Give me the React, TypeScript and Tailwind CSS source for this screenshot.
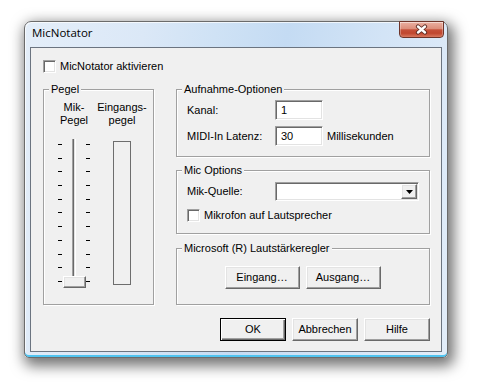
const sunken =
  "border border-t-[#a0a0a0] border-l-[#a0a0a0] border-b-white border-r-white bg-white shadow-[inset_1px_1px_0_#696969,inset_-1px_-1px_0_#e3e3e3]";
const raised =
  "border border-t-white border-l-white border-b-[#696969] border-r-[#696969] bg-[#f0f0f0] shadow-[inset_-1px_-1px_0_#a0a0a0,inset_1px_1px_0_#e3e3e3]";

function Group({ label, className, children }: { label: string; className: string; children?: React.ReactNode }) {
  return (
    <div className={`relative border border-[#a0a0a0] shadow-[inset_1px_1px_0_#fff,1px_1px_0_#fff] ${className}`}>
      <span className="absolute top-[-7px] left-[5px] bg-[#f0f0f0] px-[2px] leading-[13px]">{label}</span>
      {children}
    </div>
  );
}

function Checkbox() {
  return <div className={`h-[13px] w-[13px] shrink-0 ${sunken}`} />;
}

function Button({ children, primary }: { children: React.ReactNode; primary?: boolean }) {
  if (primary) {
    return (
      <div className="flex h-[23px] w-[66px] items-center justify-center border border-black bg-[#f0f0f0] shadow-[inset_1px_1px_0_#fff,inset_-1px_-1px_0_#696969,inset_-2px_-2px_0_#a0a0a0]">
        {children}
      </div>
    );
  }
  return <div className={`flex h-[23px] w-[66px] items-center justify-center ${raised}`}>{children}</div>;
}

function Ticks() {
  return (
    <div className="flex h-full w-[4px] flex-col justify-between py-[5px]">
      {Array.from({ length: 11 }).map((_, i) => (
        <div key={i} className="h-[1px] w-[4px] bg-black" />
      ))}
    </div>
  );
}

function Field({ value, w }: { value: string; w: string }) {
  return <div className={`flex h-[20px] items-center pl-[5px] ${w} ${sunken}`}>{value}</div>;
}

export default function App() {
  return (
    <div className="h-[389px] w-[481px] overflow-hidden bg-white pt-[21px] pl-[24px]">
      {/* window frame */}
      <div className="flex h-[337px] w-[424px] flex-col rounded-t-[7px] rounded-b-[5px] border border-[#6b6b6b] bg-[linear-gradient(100deg,#e4eef9_0%,#dbe8f7_25%,#cfe2f5_40%,#c4dbf3_55%,#d3e4f6_75%,#e2edf9_100%)] px-[5px] pb-[5px] shadow-[inset_0_-2px_0_#4fc4f0,inset_1px_1px_0_rgba(255,255,255,0.7),3px_5px_14px_3px_rgba(0,0,0,0.55)]">
        <div className="flex h-[25px] items-start justify-between">
          <span className="pt-[3px] pl-[2px] font-['Open_Sans',sans-serif] text-[11.5px] leading-[16px] text-black">
            MicNotator
          </span>
          <div className="-mt-[1px] -mr-[2px] flex h-[17px] w-[45px] items-center justify-center rounded-b-[4px] border border-[#6e3328] bg-[linear-gradient(to_bottom,#eab0a2_0%,#dc8e7b_45%,#c5503a_52%,#c0472f_75%,#d9785f_100%)] shadow-[inset_0_1px_0_rgba(255,255,255,0.5),inset_1px_0_0_rgba(255,255,255,0.3),inset_-1px_0_0_rgba(255,255,255,0.3)]">
            <svg width="13" height="11" viewBox="0 0 13 11">
              <path d="M3 2.5 L10 8.5 M10 2.5 L3 8.5" stroke="#5b2a22" strokeWidth="4.2" strokeLinecap="round" fill="none" />
              <path d="M3 2.5 L10 8.5 M10 2.5 L3 8.5" stroke="#fff" strokeWidth="2.4" strokeLinecap="round" fill="none" />
            </svg>
          </div>
        </div>

        {/* client area */}
        <div className="flex h-[305px] flex-col border border-[#6b7480] bg-[#f0f0f0] pt-[12px] pr-[11px] pl-[12px] font-['Liberation_Sans',Arial,sans-serif] text-[11px] text-black">
          <div className="flex h-[13px] items-center gap-[4px]">
            <Checkbox />
            <span className="leading-[13px]">MicNotator aktivieren</span>
          </div>

          <div className="mt-[16px] flex gap-[22px]">
            {/* Pegel */}
            <Group label="Pegel" className="flex h-[216px] w-[111px] pt-[11px] pl-[14px]">
              <div className="flex w-[32px] flex-col items-center">
                <div className="text-center leading-[13px] whitespace-nowrap">
                  Mik-
                  <br />
                  Pegel
                </div>
                <div className="relative mt-[12px] flex h-[148px] w-[32px] justify-between">
                  <Ticks />
                  <div className="h-full w-[4px] border-l border-l-[#a0a0a0] border-r border-r-white bg-[linear-gradient(to_right,#696969_50%,#e3e3e3_50%)]" />
                  <Ticks />
                  <div className={`absolute top-[137px] left-[5px] h-[12px] w-[23px] ${raised}`} />
                </div>
              </div>
              <div className="ml-[7px] flex w-[50px] flex-col items-center">
                <div className="text-center leading-[13px] whitespace-nowrap">
                  Eingangs-
                  <br />
                  pegel
                </div>
                <div className="mt-[14px] h-[144px] w-[18px] border border-[#6d6d6d]" />
              </div>
            </Group>

            {/* right column */}
            <div className="flex w-[254px] flex-col">
              <Group label="Aufnahme-Optionen" className="flex h-[68px] flex-col gap-[6px] px-[10px] pt-[10px]">
                <div className="flex h-[20px] items-center">
                  <span className="w-[88px]">Kanal:</span>
                  <Field value="1" w="w-[48px]" />
                </div>
                <div className="flex h-[20px] items-center">
                  <span className="w-[88px]">MIDI-In Latenz:</span>
                  <Field value="30" w="w-[48px]" />
                  <span className="ml-[4px]">Millisekunden</span>
                </div>
              </Group>

              <Group label="Mic Options" className="mt-[13px] flex h-[64px] flex-col px-[10px] pt-[11px]">
                <div className="flex h-[19px] items-center">
                  <span className="w-[88px]">Mik-Quelle:</span>
                  <div className={`flex h-[19px] w-[144px] justify-end p-[1px] ${sunken}`}>
                    <div className={`flex h-full w-[16px] items-center justify-center ${raised}`}>
                      <svg width="7" height="4" viewBox="0 0 7 4">
                        <path d="M0 0 H7 L3.5 4 Z" fill="#000" />
                      </svg>
                    </div>
                  </div>
                </div>
                <div className="mt-[8px] flex h-[13px] items-center gap-[4px]">
                  <Checkbox />
                  <span className="leading-[13px]">Mikrofon auf Lautsprecher</span>
                </div>
              </Group>

              <Group label="Microsoft (R) Lautstärkeregler" className="mt-[14px] flex h-[57px] justify-center gap-[6px] pt-[17px] pr-[1px]">
                <div className={`flex h-[23px] w-[75px] items-center justify-center ${raised}`}>Eingang…</div>
                <div className={`flex h-[23px] w-[75px] items-center justify-center ${raised}`}>Ausgang…</div>
              </Group>
            </div>
          </div>

          <div className="mt-[13px] flex justify-end gap-[6px]">
            <Button primary>OK</Button>
            <Button>Abbrechen</Button>
            <Button>Hilfe</Button>
          </div>
        </div>
      </div>
    </div>
  );
}
